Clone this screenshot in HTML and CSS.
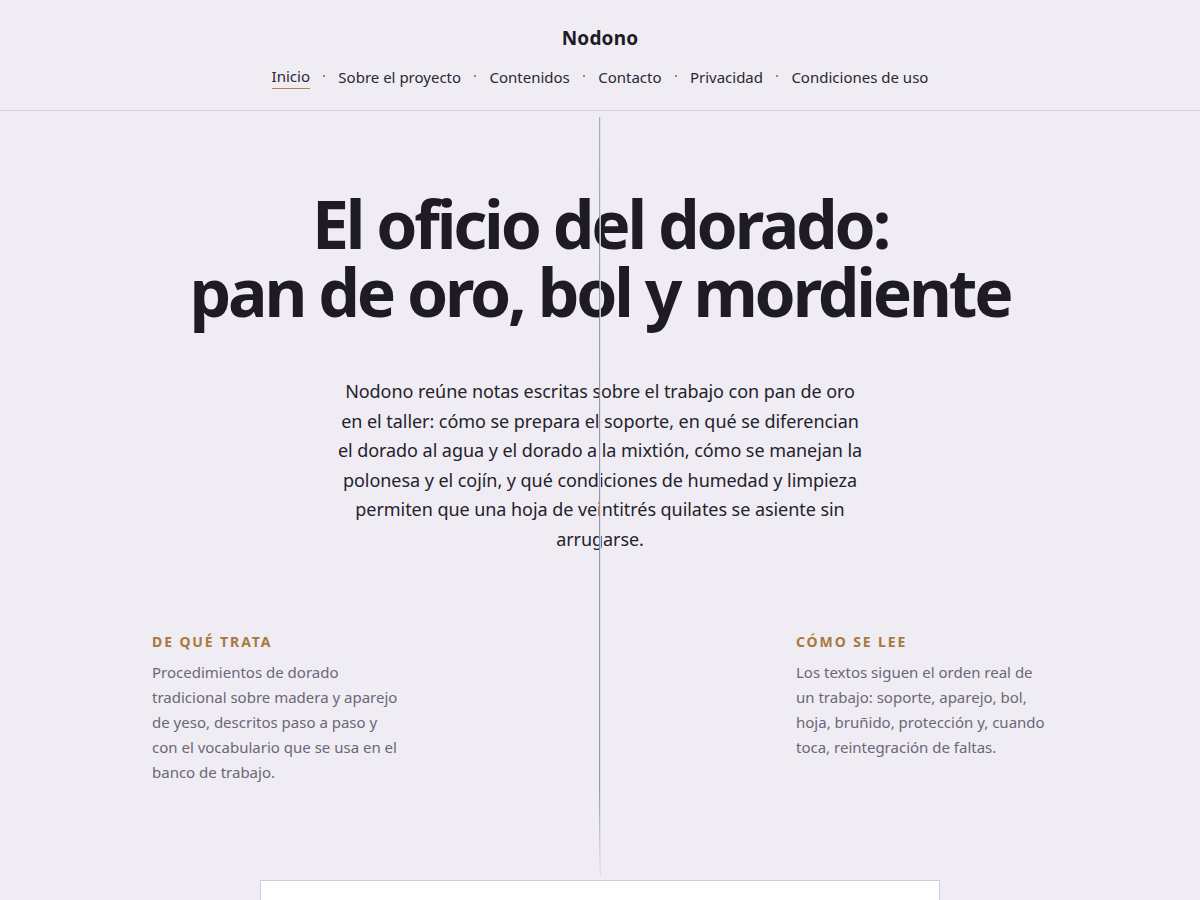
FILE: index.html
```html
<!DOCTYPE html>
<html lang="es">
<head>
<meta charset="utf-8">
<title>Nodono</title>
<link rel="stylesheet" href="styles.css">
</head>
<body>
<header class="site-header">
  <div class="brand">Nodono</div>
  <nav class="nav">
    <a class="nav-link active" href="#">Inicio</a>
    <span class="dot"></span>
    <a class="nav-link" href="#">Sobre el proyecto</a>
    <span class="dot"></span>
    <a class="nav-link" href="#">Contenidos</a>
    <span class="dot"></span>
    <a class="nav-link" href="#">Contacto</a>
    <span class="dot"></span>
    <a class="nav-link" href="#">Privacidad</a>
    <span class="dot"></span>
    <a class="nav-link" href="#">Condiciones de uso</a>
  </nav>
</header>
<main class="main">
  <div class="axis"></div>
  <section class="hero">
    <h1 class="title">El oficio del dorado:<br>pan de oro, bol y mordiente</h1>
    <p class="lead">Nodono reúne notas escritas sobre el trabajo con pan de oro en el taller: cómo se prepara el soporte, en qué se diferencian el dorado al agua y el dorado a la mixtión, cómo se manejan la polonesa y el cojín, y qué condiciones de humedad y limpieza permiten que una hoja de veintitrés quilates se asiente sin arrugarse.</p>
  </section>
  <section class="notes">
    <div class="note">
      <h2 class="note-label">De qué trata</h2>
      <p class="note-text">Procedimientos de dorado tradicional sobre madera y aparejo de yeso, descritos paso a paso y con el vocabulario que se usa en el banco de trabajo.</p>
    </div>
    <div class="note">
      <h2 class="note-label">Cómo se lee</h2>
      <p class="note-text">Los textos siguen el orden real de un trabajo: soporte, aparejo, bol, hoja, bruñido, protección y, cuando toca, reintegración de faltas.</p>
    </div>
  </section>
  <section class="card"></section>
</main>
</body>
</html>
```

FILE: styles.css
```css
* { box-sizing: border-box; }
html, body { margin: 0; padding: 0; }
body {
  background: #efecf3;
  color: #1e1b25;
  font-family: "Noto Sans", "Open Sans", sans-serif;
}
.site-header {
  padding-top: 26px;
  height: 111px;
  border-bottom: 1px solid #d7d4dc;
  display: flex;
  flex-direction: column;
  align-items: center;
}
.brand {
  font-size: 19px;
  font-weight: 700;
  line-height: 24px;
  color: #1e1b25;
  letter-spacing: 0.01em;
}
.nav {
  margin-top: 15px;
  display: flex;
  align-items: center;
  gap: 13.2px;
  font-size: 15px;
  line-height: 22px;
}
.nav-link {
  color: #2b2833;
  text-decoration: none;
  padding-bottom: 1px;
}
.nav-link.active {
  border-bottom: 1px solid #b9804a;
}
.dot {
  width: 2px;
  height: 2px;
  background: #c07f45;
  position: relative;
  top: -1px;
}
.main {
  position: relative;
  padding-top: 78px;
}
.axis {
  position: absolute;
  left: 599px;
  top: 6px;
  width: 1px;
  height: 760px;
  background: linear-gradient(to bottom, rgba(150,148,172,0.75) 0%, rgba(145,143,170,0.95) 40%, rgba(145,143,170,0.95) 88%, rgba(145,143,170,0) 100%);
  box-shadow: 1px 0 0 rgba(225,222,232,0.9);
}
.hero {
  display: flex;
  flex-direction: column;
  align-items: center;
  text-align: center;
}
.title {
  margin: 0;
  font-size: 66px;
  line-height: 68px;
  font-weight: 700;
  letter-spacing: -0.048em;
  color: #1e1b25;
}
.lead {
  margin: 52px 0 0;
  width: 528px;
  font-size: 18px;
  line-height: 29.6px;
  letter-spacing: -0.003em;
  color: #25222c;
}
.notes {
  width: 896px;
  margin: 77px auto 0;
  display: flex;
  justify-content: space-between;
}
.note {
  width: 252px;
}
.note-label {
  margin: 0;
  font-size: 14px;
  line-height: 20px;
  font-weight: 700;
  letter-spacing: 0.135em;
  text-transform: uppercase;
  color: #a8793d;
}
.note-text {
  margin: 8px 0 0;
  font-size: 15px;
  line-height: 25px;
  color: #6b6777;
}
.card {
  width: 680px;
  height: 120px;
  margin: 95px auto 0;
  background: #ffffff;
  border: 1px solid #cfccd5;
}
```
